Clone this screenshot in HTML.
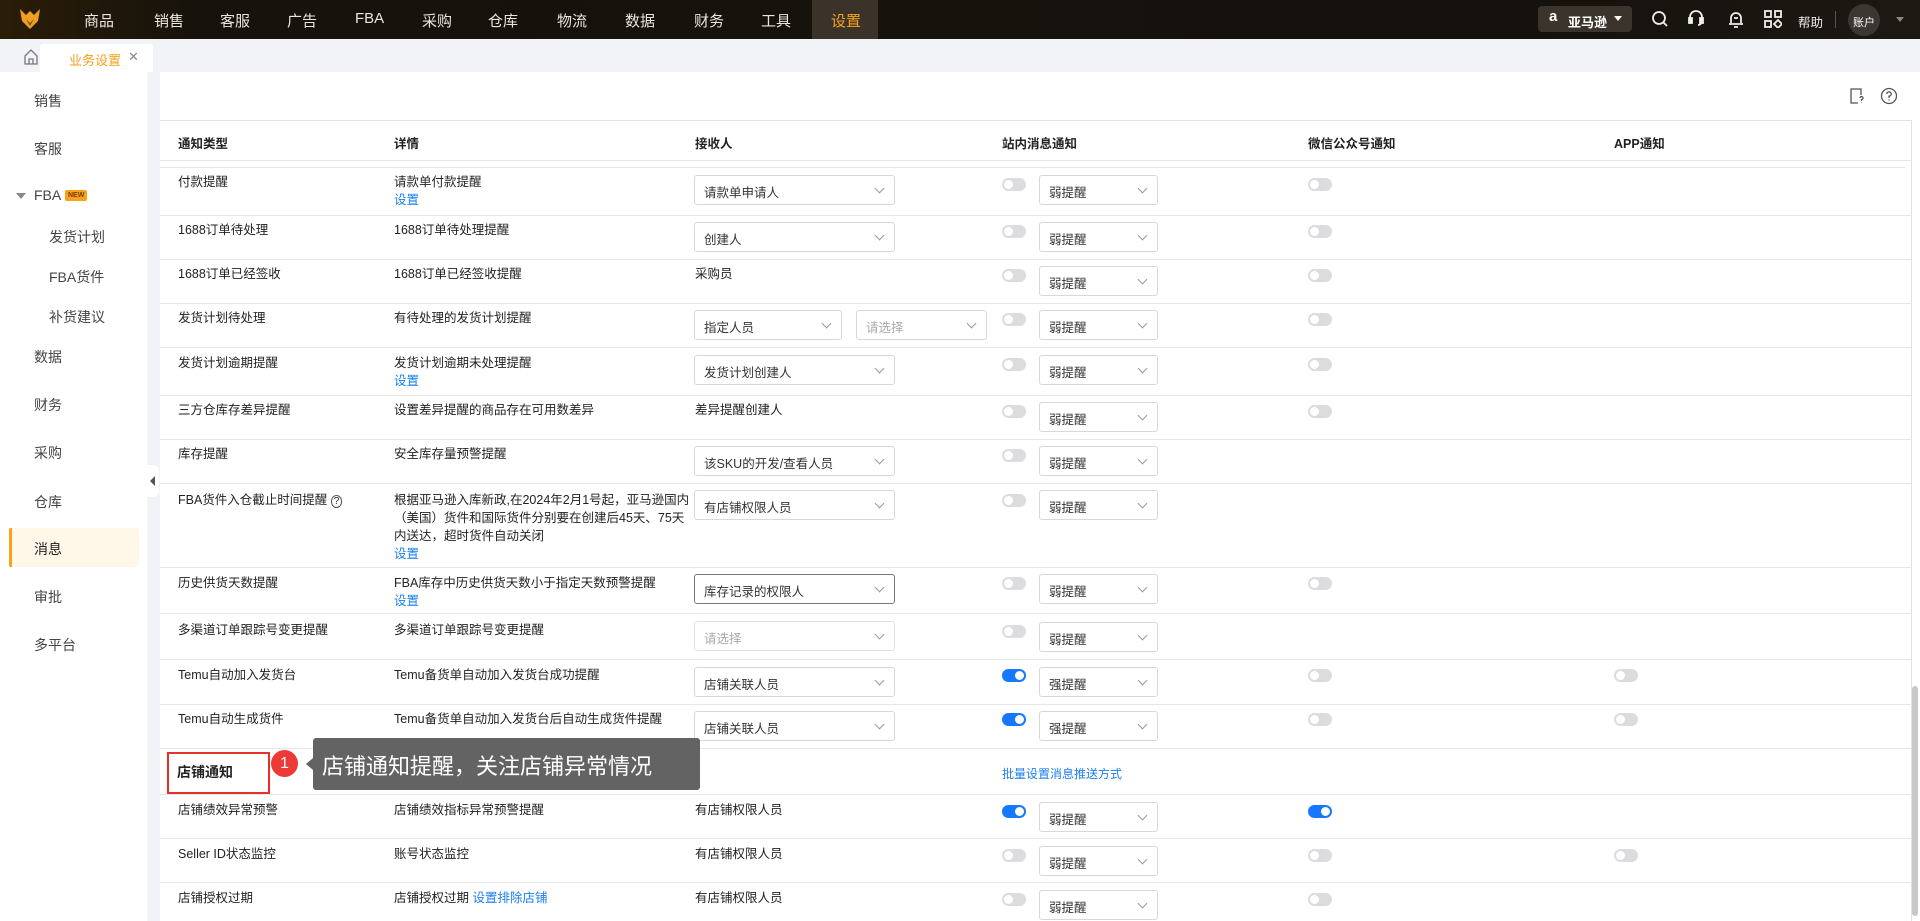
<!DOCTYPE html>
<html><head><meta charset="utf-8"><style>
*{box-sizing:border-box;margin:0;padding:0}
body{width:1920px;height:921px;overflow:hidden;position:relative;background:#f2f3f7;font-family:"Liberation Sans","Noto Sans CJK SC",sans-serif;font-size:12.5px;color:#222}
.a{position:absolute}
.nav{left:0;top:0;width:1920px;height:39px;background:linear-gradient(90deg,#2a1d08 0%,#17120b 10%,#15110c 80%,#1d1812 100%)}
.nv{top:10px;color:#e8e6e2;font-size:15px}
.side{left:0;top:72px;width:147px;height:849px;background:#fff}
.si{left:34px;font-size:14px;color:#444}
.sub{left:49px;font-size:14px;color:#444}
.main{left:160px;top:72px;width:1760px;height:849px;background:#fff}
.hl{height:1px;background:#e6e6e6;left:160px;width:1752px}
.t{font-size:12.5px;color:#222;line-height:18px}
.lk{color:#1a7ff0}
.sel{height:30px;border:1px solid #d8d8d8;border-radius:3px;background:#fff;font-size:12.5px;color:#333;padding:6px 0 0 9px}
.sel:after{content:"";position:absolute;right:11px;top:9px;width:6px;height:6px;border-right:1px solid #999;border-bottom:1px solid #999;transform:rotate(45deg)}
.tg{width:24px;height:13px;border-radius:7px;background:#dcdcdf}
.tg:after{content:"";position:absolute;left:2px;top:2px;width:9px;height:9px;border-radius:50%;background:#fff}
.tg.on{background:#1677ff}.tg.on:after{left:13px}
.th{font-weight:bold;font-size:12.5px;top:133px}
</style></head><body>
<div class="a nav"></div>
<svg class="a" style="left:18px;top:7px" width="24" height="24" viewBox="0 0 24 24"><path d="M2 2 L8 8 L12 4 L16 8 L22 2 L20 14 L12 22 L4 14 Z" fill="#f0a020"/><path d="M8 12 L12 16 L16 12 L12 19Z" fill="#7a4c08"/></svg>
<div class="a" style="left:812px;top:0;width:66px;height:39px;background:#3b332a"></div>
<div class="a nv" style="left:84px">商品</div><div class="a nv" style="left:154px">销售</div><div class="a nv" style="left:220px">客服</div><div class="a nv" style="left:287px">广告</div><div class="a nv" style="left:355px">FBA</div><div class="a nv" style="left:422px">采购</div><div class="a nv" style="left:488px">仓库</div><div class="a nv" style="left:557px">物流</div><div class="a nv" style="left:625px">数据</div><div class="a nv" style="left:694px">财务</div><div class="a nv" style="left:761px">工具</div><div class="a nv" style="left:831px;color:#f7a21c">设置</div>
<div class="a" style="left:1538px;top:6px;width:94px;height:26px;background:#3a342d;border-radius:4px"></div>
<div class="a" style="left:1549px;top:8px;color:#fff;font-weight:bold;font-size:15px">a</div>
<div class="a" style="left:1568px;top:12px;color:#fff;font-size:13px;font-weight:bold">亚马逊</div>
<div class="a" style="left:1614px;top:16px;border-left:4px solid transparent;border-right:4px solid transparent;border-top:5px solid #fff"></div>
<svg class="a" style="left:1651px;top:10px" width="18" height="18" viewBox="0 0 18 18" fill="none" stroke="#eee" stroke-width="1.8"><circle cx="8" cy="8" r="6"/><path d="M12.5 12.5L16 16"/></svg>
<svg class="a" style="left:1687px;top:9px" width="18" height="20" viewBox="0 0 18 20" fill="none" stroke="#eee" stroke-width="1.8"><path d="M3 11V8a6 6 0 0 1 12 0v4a4 4 0 0 1-4 4"/><rect x="2" y="9" width="3" height="5" fill="#eee"/><rect x="13" y="9" width="3" height="5" fill="#eee"/></svg>
<svg class="a" style="left:1727px;top:9px" width="18" height="20" viewBox="0 0 18 20" fill="none" stroke="#eee" stroke-width="1.8"><path d="M4 14V9a5 5 0 0 1 10 0v5M2 15h14M7 18h4"/><path d="M7 9h4"/></svg>
<svg class="a" style="left:1764px;top:10px" width="18" height="18" viewBox="0 0 18 18" fill="none" stroke="#eee" stroke-width="1.8"><rect x="1" y="1" width="6" height="6"/><rect x="11" y="1" width="6" height="6"/><rect x="1" y="11" width="6" height="6"/><path d="M14 10l4 4-4 4-4-4z"/></svg>
<div class="a" style="left:1798px;top:12px;color:#eee;font-size:12.5px">帮助</div>
<div class="a" style="left:1835px;top:11px;width:1px;height:17px;background:#555"></div>
<div class="a" style="left:1848px;top:4px;width:32px;height:32px;border-radius:50%;background:#3a3631;color:#fff;font-size:11px;padding:10px 0 0 5px">账户</div>
<div class="a" style="left:1896px;top:17px;border-left:4px solid transparent;border-right:4px solid transparent;border-top:5px solid #888"></div>
<svg class="a" style="left:24px;top:49px" width="14" height="16" viewBox="0 0 14 16" fill="none" stroke="#777" stroke-width="1.3"><path d="M1 7L7 1l6 6v8H1z"/><path d="M5 15v-5h4v5"/></svg>
<div class="a" style="left:40px;top:44px;width:113px;height:28px;background:#fff;border-radius:3px 3px 0 0"></div>
<div class="a" style="left:69px;top:50px;color:#f5a01a;font-size:13px">业务设置</div>
<div class="a" style="left:128px;top:49px;color:#888;font-size:13px">✕</div>
<div class="a side"></div>
<div class="a si" style="top:91px">销售</div>
<div class="a si" style="top:139px">客服</div>
<div class="a" style="left:16px;top:193px;border-left:5px solid transparent;border-right:5px solid transparent;border-top:6px solid #888"></div>
<div class="a si" style="top:187px">FBA</div>
<div class="a" style="left:65px;top:190px;background:#f7a21c;color:#7a3a00;font-size:7px;font-weight:bold;padding:2px 3px;border-radius:2px">NEW</div>
<div class="a sub" style="top:227px">发货计划</div>
<div class="a sub" style="top:267px">FBA货件</div>
<div class="a sub" style="top:307px">补货建议</div>
<div class="a si" style="top:347px">数据</div>
<div class="a si" style="top:395px">财务</div>
<div class="a si" style="top:443px">采购</div>
<div class="a si" style="top:492px">仓库</div>
<div class="a" style="left:9px;top:528px;width:130px;height:39px;background:#fff7e8;border-left:3px solid #f7a21c;border-radius:2px"></div>
<div class="a si" style="top:539px;color:#222">消息</div>
<div class="a si" style="top:587px">审批</div>
<div class="a si" style="top:635px">多平台</div>
<div class="a" style="left:147px;top:465px;width:12px;height:32px;background:#fff;border-radius:0 6px 6px 0"></div>
<div class="a" style="left:150px;top:476px;border-top:5px solid transparent;border-bottom:5px solid transparent;border-right:5px solid #555"></div>
<div class="a main"></div>
<svg class="a" style="left:1849px;top:88px" width="16" height="16" viewBox="0 0 16 16" fill="none" stroke="#555" stroke-width="1.3"><path d="M9 15H2V1h10v6"/><path d="M11 10a1.5 1.5 0 1 1 1.5 1.5V13M12.5 14.5v.5"/></svg>
<svg class="a" style="left:1880px;top:87px" width="18" height="18" viewBox="0 0 18 18" fill="none" stroke="#555" stroke-width="1.3"><circle cx="9" cy="9" r="7.5"/><path d="M6.8 7a2.2 2.2 0 1 1 2.2 2.2V11M9 12.5v1"/></svg>
<div class="a" style="left:160px;top:120px;width:1752px;height:1px;background:#e3e3e3"></div>
<div class="a" style="left:1911px;top:120px;width:1px;height:801px;background:#e3e3e3"></div>
<div class="a th" style="left:178px">通知类型</div><div class="a th" style="left:394px">详情</div><div class="a th" style="left:695px">接收人</div><div class="a th" style="left:1002px">站内消息通知</div><div class="a th" style="left:1308px">微信公众号通知</div><div class="a th" style="left:1614px">APP通知</div>
<div class="a hl" style="top:160px"></div><div class="a hl" style="top:167px;width:1745px"></div>
<div class="a hl" style="top:215px"></div><div class="a hl" style="top:259px"></div><div class="a hl" style="top:303px"></div><div class="a hl" style="top:347px"></div><div class="a hl" style="top:395px"></div><div class="a hl" style="top:439px"></div><div class="a hl" style="top:483px"></div><div class="a hl" style="top:567px"></div><div class="a hl" style="top:613px"></div><div class="a hl" style="top:659px"></div><div class="a hl" style="top:704px"></div><div class="a hl" style="top:748px"></div><div class="a hl" style="top:794px"></div><div class="a hl" style="top:838px"></div><div class="a hl" style="top:882px"></div>

<div class="a t" style="left:178px;top:173px">付款提醒</div><div class="a t" style="left:394px;top:173px">请款单付款提醒<br><span class="lk">设置</span></div>
<div class="a sel" style="left:694px;top:175px;width:201px">请款单申请人</div>
<div class="a tg" style="left:1002px;top:178px"></div><div class="a sel" style="left:1039px;top:175px;width:119px">弱提醒</div><div class="a tg" style="left:1308px;top:178px"></div>

<div class="a t" style="left:178px;top:221px">1688订单待处理</div><div class="a t" style="left:394px;top:221px">1688订单待处理提醒</div>
<div class="a sel" style="left:694px;top:222px;width:201px">创建人</div>
<div class="a tg" style="left:1002px;top:225px"></div><div class="a sel" style="left:1039px;top:222px;width:119px">弱提醒</div><div class="a tg" style="left:1308px;top:225px"></div>

<div class="a t" style="left:178px;top:265px">1688订单已经签收</div><div class="a t" style="left:394px;top:265px">1688订单已经签收提醒</div><div class="a t" style="left:695px;top:265px">采购员</div>
<div class="a tg" style="left:1002px;top:269px"></div><div class="a sel" style="left:1039px;top:266px;width:119px">弱提醒</div><div class="a tg" style="left:1308px;top:269px"></div>

<div class="a t" style="left:178px;top:309px">发货计划待处理</div><div class="a t" style="left:394px;top:309px">有待处理的发货计划提醒</div>
<div class="a sel" style="left:694px;top:310px;width:148px">指定人员</div><div class="a sel" style="left:856px;top:310px;width:131px;color:#aaa">请选择</div>
<div class="a tg" style="left:1002px;top:313px"></div><div class="a sel" style="left:1039px;top:310px;width:119px">弱提醒</div><div class="a tg" style="left:1308px;top:313px"></div>

<div class="a t" style="left:178px;top:354px">发货计划逾期提醒</div><div class="a t" style="left:394px;top:354px">发货计划逾期未处理提醒<br><span class="lk">设置</span></div>
<div class="a sel" style="left:694px;top:355px;width:201px">发货计划创建人</div>
<div class="a tg" style="left:1002px;top:358px"></div><div class="a sel" style="left:1039px;top:355px;width:119px">弱提醒</div><div class="a tg" style="left:1308px;top:358px"></div>

<div class="a t" style="left:178px;top:401px">三方仓库存差异提醒</div><div class="a t" style="left:394px;top:401px">设置差异提醒的商品存在可用数差异</div><div class="a t" style="left:695px;top:401px">差异提醒创建人</div>
<div class="a tg" style="left:1002px;top:405px"></div><div class="a sel" style="left:1039px;top:402px;width:119px">弱提醒</div><div class="a tg" style="left:1308px;top:405px"></div>

<div class="a t" style="left:178px;top:445px">库存提醒</div><div class="a t" style="left:394px;top:445px">安全库存量预警提醒</div>
<div class="a sel" style="left:694px;top:446px;width:201px">该SKU的开发/查看人员</div>
<div class="a tg" style="left:1002px;top:449px"></div><div class="a sel" style="left:1039px;top:446px;width:119px">弱提醒</div>

<div class="a t" style="left:178px;top:491px">FBA货件入仓截止时间提醒 <span style="font-size:10px;border:1px solid #555;border-radius:50%;padding:0 2px">?</span></div>
<div class="a t" style="left:394px;top:491px;width:298px">根据亚马逊入库新政,在2024年2月1号起，亚马逊国内（美国）货件和国际货件分别要在创建后45天、75天内送达，超时货件自动关闭<br><span class="lk">设置</span></div>
<div class="a sel" style="left:694px;top:490px;width:201px">有店铺权限人员</div>
<div class="a tg" style="left:1002px;top:494px"></div><div class="a sel" style="left:1039px;top:490px;width:119px">弱提醒</div>

<div class="a t" style="left:178px;top:574px">历史供货天数提醒</div><div class="a t" style="left:394px;top:574px">FBA库存中历史供货天数小于指定天数预警提醒<br><span class="lk">设置</span></div>
<div class="a sel" style="left:694px;top:574px;width:201px;border-color:#777">库存记录的权限人</div>
<div class="a tg" style="left:1002px;top:577px"></div><div class="a sel" style="left:1039px;top:574px;width:119px">弱提醒</div><div class="a tg" style="left:1308px;top:577px"></div>

<div class="a t" style="left:178px;top:621px">多渠道订单跟踪号变更提醒</div><div class="a t" style="left:394px;top:621px">多渠道订单跟踪号变更提醒</div>
<div class="a sel" style="left:694px;top:621px;width:201px;color:#aaa;border-color:#e3e3e3">请选择</div>
<div class="a tg" style="left:1002px;top:625px"></div><div class="a sel" style="left:1039px;top:622px;width:119px">弱提醒</div>

<div class="a t" style="left:178px;top:666px">Temu自动加入发货台</div><div class="a t" style="left:394px;top:666px">Temu备货单自动加入发货台成功提醒</div>
<div class="a sel" style="left:694px;top:667px;width:201px">店铺关联人员</div>
<div class="a tg on" style="left:1002px;top:669px"></div><div class="a sel" style="left:1039px;top:667px;width:119px">强提醒</div><div class="a tg" style="left:1308px;top:669px"></div><div class="a tg" style="left:1614px;top:669px"></div>

<div class="a t" style="left:178px;top:710px">Temu自动生成货件</div><div class="a t" style="left:394px;top:710px">Temu备货单自动加入发货台后自动生成货件提醒</div>
<div class="a sel" style="left:694px;top:711px;width:201px">店铺关联人员</div>
<div class="a tg on" style="left:1002px;top:713px"></div><div class="a sel" style="left:1039px;top:711px;width:119px">强提醒</div><div class="a tg" style="left:1308px;top:713px"></div><div class="a tg" style="left:1614px;top:713px"></div>

<div class="a" style="left:167px;top:752px;width:103px;height:42px;border:2px solid #e8302a"></div>
<div class="a" style="left:177px;top:762px;font-size:14px;font-weight:bold">店铺通知</div>
<div class="a" style="left:271px;top:750px;width:27px;height:27px;border-radius:50%;background:#ee3a36;color:#fff;font-size:16px;text-align:center;line-height:27px">1</div>
<div class="a" style="left:306px;top:758px;border-top:6px solid transparent;border-bottom:6px solid transparent;border-right:7px solid #636363"></div>
<div class="a" style="left:313px;top:738px;width:387px;height:52px;background:#636363;border-radius:3px;color:#fff;font-size:22px;padding:11px 0 0 9px">店铺通知提醒，关注店铺异常情况</div>
<div class="a lk" style="left:1002px;top:765px;font-size:12px">批量设置消息推送方式</div>

<div class="a t" style="left:178px;top:801px">店铺绩效异常预警</div><div class="a t" style="left:394px;top:801px">店铺绩效指标异常预警提醒</div><div class="a t" style="left:695px;top:801px">有店铺权限人员</div>
<div class="a tg on" style="left:1002px;top:805px"></div><div class="a sel" style="left:1039px;top:802px;width:119px">弱提醒</div><div class="a tg on" style="left:1308px;top:805px"></div>

<div class="a t" style="left:178px;top:845px">Seller ID状态监控</div><div class="a t" style="left:394px;top:845px">账号状态监控</div><div class="a t" style="left:695px;top:845px">有店铺权限人员</div>
<div class="a tg" style="left:1002px;top:849px"></div><div class="a sel" style="left:1039px;top:846px;width:119px">弱提醒</div><div class="a tg" style="left:1308px;top:849px"></div><div class="a tg" style="left:1614px;top:849px"></div>

<div class="a t" style="left:178px;top:889px">店铺授权过期</div><div class="a t" style="left:394px;top:889px">店铺授权过期 <span class="lk">设置排除店铺</span></div><div class="a t" style="left:695px;top:889px">有店铺权限人员</div>
<div class="a tg" style="left:1002px;top:893px"></div><div class="a sel" style="left:1039px;top:890px;width:119px">弱提醒</div><div class="a tg" style="left:1308px;top:893px"></div>
<div class="a" style="left:1912px;top:686px;width:6px;height:230px;background:#c8c8c8;border-radius:3px"></div>
</body></html>
